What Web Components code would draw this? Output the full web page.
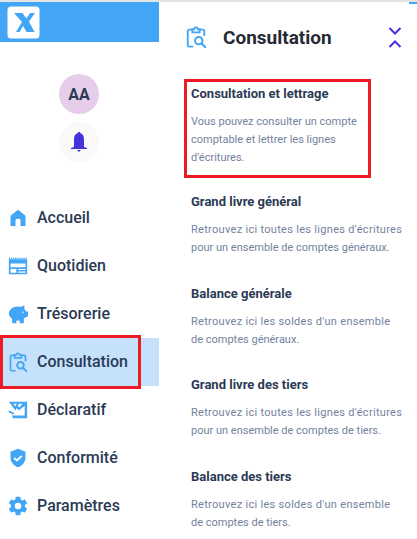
<!DOCTYPE html>
<html lang="fr">
<head>
<meta charset="utf-8">
<title>Consultation</title>
<style>
    html, body { margin: 0; height: 100%; background: #fff; overflow: hidden; }
    body { font-family: Roboto, "Liberation Sans", sans-serif; }
</style>
</head>
<body>
<app-shell>
    <side-nav slot="nav">
        <nav-item label="Accueil" icon="home"></nav-item>
        <nav-item label="Quotidien" icon="daily"></nav-item>
        <nav-item label="Trésorerie" icon="piggy"></nav-item>
        <nav-item label="Consultation" icon="consult" active marked></nav-item>
        <nav-item label="Déclaratif" icon="declare"></nav-item>
        <nav-item label="Conformité" icon="shield"></nav-item>
        <nav-item label="Paramètres" icon="gear"></nav-item>
    </side-nav>
    <content-panel slot="content" heading="Consultation">
        <info-item heading="Consultation et lettrage" marked>Vous pouvez consulter un compte<br>comptable et lettrer les lignes<br>d'écritures.</info-item>
        <info-item heading="Grand livre général"><span class="wide">Retrouvez ici toutes les lignes d'écritures</span><br>pour un ensemble de comptes généraux.</info-item>
        <info-item heading="Balance générale"><span class="wide">Retrouvez ici les soldes d'un ensemble</span><br>de comptes généraux.</info-item>
        <info-item heading="Grand livre des tiers"><span class="wide">Retrouvez ici toutes les lignes d'écritures</span><br>pour un ensemble de comptes de tiers.</info-item>
        <info-item heading="Balance des tiers"><span class="wide">Retrouvez ici les soldes d'un ensemble</span><br>de comptes de tiers.</info-item>
    </content-panel>
</app-shell>

<script>
(function () {
    const consultIcon = `<path fill="none" stroke="currentColor" stroke-width="2" stroke-linejoin="round" d="M8 4H4.500A1.500 1.500 0 0 0 3 5.500V21a1.500 1.500 0 0 0 1.500 1.500H9M16 4h3.500A1.500 1.500 0 0 1 21 5.500V11"/><path fill="none" stroke="currentColor" stroke-width="2" d="M8 3.500h2a2 2 0 0 1 4 0h2V7H8z"/><circle cx="15" cy="16" r="4" fill="none" stroke="currentColor" stroke-width="2.200"/><path stroke="currentColor" stroke-width="2.400" stroke-linecap="round" d="M18 19l4 4"/>`;

    const icons = {
        home: `<path fill="currentColor" d="M12 2 L4 8.500 Q3 9.300 3 10.500V21.500h6v-7q0-1.500 3-1.500t3 1.500v7h6V10.500Q21 9.300 20 8.500z"/>`,
        daily: `<path fill="currentColor" fill-rule="evenodd" d="M1 4h22v18H1zM3 9v4.500h18V9zM3 15.500V20h7v-4.500zM12 15.500v1.200h9v-1.200zM12 18.500V20h9v-1.500z"/><path stroke="currentColor" stroke-width="2" stroke-dasharray="1.500 1" d="M1 3h22"/>`,
        piggy: `<ellipse cx="11.500" cy="11.500" rx="10.500" ry="8.500" fill="currentColor"/><path fill="currentColor" d="M14 5c1-1.800 3-3 5-3 .8 0 1 .6.9 1.400l-.5 3.100 1.500 2.500H24v6l-3 1-4 3-3-1-8 0-2-3z"/><path fill="currentColor" d="M5 17h5v6H5zM14 17h5v6h-5z"/><circle cx="18" cy="10" r=".9" fill="#fff"/>`,
        consult: consultIcon,
        declare: `<path fill="currentColor" fill-rule="evenodd" d="M1 2h22v20H6l-1.500-3.500H20V7l-7 5.500-2.500-3L9 12.500zM6 4.500l3 3 1.500-3zM13 4.500l-1 3 1.500 1.500 4-4.500z"/><path fill="currentColor" d="M1 12.500l6.500 3-1 2L1 15z"/>`,
        shield: `<path fill="currentColor" d="M12 1 3 4.500V11c0 5.700 3.800 10.500 9 12 5.200-1.500 9-6.300 9-12V4.500z"/><path fill="none" stroke="#fff" stroke-width="2.200" d="M7.500 12l3.200 3 5.800-5.500"/>`,
        gear: `<path fill="currentColor" transform="translate(12 12) scale(1.120) translate(-12 -12)" d="M19.430 12.980c.04-.32.070-.64.070-.98s-.03-.66-.07-.98l2.110-1.650a.5.5 0 0 0 .12-.64l-2-3.460a.5.5 0 0 0-.61-.22l-2.490 1c-.52-.4-1.080-.73-1.690-.98l-.38-2.650A.49.49 0 0 0 14 2h-4a.49.49 0 0 0-.49.42l-.38 2.650c-.61.25-1.170.59-1.690.98l-2.490-1a.49.49 0 0 0-.61.22l-2 3.460a.49.49 0 0 0 .12.64l2.110 1.650c-.04.32-.07.65-.07.98s.03.66.07.98l-2.110 1.650a.5.5 0 0 0-.12.64l2 3.460c.12.22.39.3.61.22l2.490-1c.52.4 1.080.73 1.690.98l.38 2.650c.03.24.24.42.49.42h4c.25 0 .46-.18.49-.42l.38-2.650c.61-.25 1.170-.59 1.690-.98l2.490 1c.23.09.49 0 .61-.22l2-3.460a.5.5 0 0 0-.12-.64zM12 15.500a3.500 3.500 0 1 1 0-7 3.500 3.500 0 0 1 0 7z"/>`
    };

    class AppShell extends HTMLElement {
        constructor() {
            super();
            this.attachShadow({ mode: 'open' });
            this.shadowRoot.innerHTML = `
                <style>
                    :host { display: block; height: 539px; position: relative; color: #2b3a55; }
                    .layout { display: grid; grid-template-columns: 159px 1fr; height: 100%; padding-top: 2px; box-sizing: border-box; }
                    .rule { position: absolute; top: 0; left: 0; right: 0; height: 2px; background: #e4e4e4; }
                    .corner { position: absolute; top: 2px; right: 0; width: 8px; height: 2px; background: #42a5f5; }
                </style>
                <div class="rule"></div>
                <div class="corner"></div>
                <div class="layout">
                    <slot name="nav"></slot>
                    <slot name="content"></slot>
                </div>
            `;
        }
    }

    class SideNav extends HTMLElement {
        constructor() {
            super();
            this.attachShadow({ mode: 'open' });
            this.shadowRoot.innerHTML = `
                <style>
                    :host { display: flex; flex-direction: column; }
                    .brand { height: 40px; background: #42a5f5; display: flex; align-items: center; padding-left: 7px; flex: none; }
                    .logo { width: 33px; height: 33px; display: block; }
                    .profile { display: flex; flex-direction: column; align-items: center; gap: 8px; padding: 32px 1px 0 0; }
                    .avatar, .bell { width: 40px; height: 40px; border-radius: 50%; display: flex; align-items: center; justify-content: center; }
                    .avatar { background: #e6cdea; font-size: 16px; font-weight: 700; color: #2b3a55; }
                    .bell { background: #f9f9f9; color: #4632dc; }
                    .links { display: flex; flex-direction: column; margin-top: 32px; }
                </style>
                <div class="brand">
                    <svg class="logo" viewBox="0 0 33 33">
                        <rect x="0.500" y="0.500" width="32" height="32" rx="3.500" fill="#fff"/>
                        <path fill="#42a5f5" d="M7 7h8.500l4 5.500L23 7h5l-6 8.500 5.500 10.500h-8l-3.500-6-3.500 6H9l6-10z"/>
                    </svg>
                </div>
                <div class="profile">
                    <div class="avatar">AA</div>
                    <div class="bell">
                        <svg width="16" height="20" viewBox="0 0 16 20"><path fill="currentColor" d="M8 0c.8 0 1.300.5 1.400 1.200C12 2 13 4.300 13 7.500V15l3 1v1H0v-1l3-1V7.500C3 4.300 4 2 6.600 1.200 6.700.5 7.200 0 8 0zM6 18h4l-2 2z"/></svg>
                    </div>
                </div>
                <div class="links"><slot></slot></div>
            `;
        }
    }

    class NavItem extends HTMLElement {
        constructor() {
            super();
            this.attachShadow({ mode: 'open' });
        }

        connectedCallback() {
            const active = this.hasAttribute('active');
            const marked = this.hasAttribute('marked');
            this.shadowRoot.innerHTML = `
                <style>
                    :host { display: block; position: relative; }
                    .item { height: 48px; display: flex; align-items: center; gap: 9px; padding-left: 8px; box-sizing: border-box; color: #2b3a55; font-size: 16px; font-weight: 500; }
                    .item.is-active { background: #c5e1fb; }
                    svg { width: 20px; height: 20px; color: #42a5f5; flex: none; }
                    span { position: relative; top: -1px; }
                    .mark { position: absolute; left: 0; top: -3px; width: 141px; height: 54px; border: 3px solid #ed1c24; box-sizing: border-box; }
                </style>
                <div class="item ${active ? 'is-active' : ''}">
                    <svg viewBox="0 0 24 24">${icons[this.getAttribute('icon')] || ''}</svg>
                    <span>${this.getAttribute('label') || ''}</span>
                </div>
                ${marked ? '<div class="mark"></div>' : ''}
            `;
        }
    }

    class ContentPanel extends HTMLElement {
        constructor() {
            super();
            this.attachShadow({ mode: 'open' });
        }

        connectedCallback() {
            this.shadowRoot.innerHTML = `
                <style>
                    :host { display: block; padding-left: 26px; padding-right: 24px; }
                    header { display: flex; align-items: center; height: 70px; }
                    header .glyph { width: 22px; height: 22px; color: #42a5f5; flex: none; }
                    h1 { margin: 0 0 0 16px; flex: 1; font-size: 19px; font-weight: 700; color: #252a34; }
                    .toggle { width: 14px; height: 22px; color: #4632dc; flex: none; }
                    .list { display: flex; flex-direction: column; gap: 27.500px; padding-left: 6px; margin-top: 13px; }
                </style>
                <header>
                    <svg class="glyph" viewBox="0 0 24 24">${icons.consult}</svg>
                    <h1>${this.getAttribute('heading') || ''}</h1>
                    <svg class="toggle" viewBox="0 0 14 22" fill="none" stroke="currentColor" stroke-width="2"><path d="M1.500 2l5.500 5.500L12.500 2M1.500 21l5.500-5.500 5.500 5.500"/></svg>
                </header>
                <div class="list"><slot></slot></div>
            `;
        }
    }

    class InfoItem extends HTMLElement {
        constructor() {
            super();
            this.attachShadow({ mode: 'open' });
        }

        connectedCallback() {
            this.shadowRoot.innerHTML = `
                <style>
                    :host { display: block; position: relative; }
                    :host([marked]) { margin-bottom: -1.500px; }
                    h2 { margin: 0 0 10px; font-size: 13px; line-height: 18px; font-weight: 700; color: #2b3a55; }
                    p { margin: 0; font-size: 11px; line-height: 18px; color: #74829e; white-space: nowrap; }
                    ::slotted(.wide) { letter-spacing: .3px; }
                    .mark { position: absolute; left: -7px; top: -6px; width: 187px; height: 99px; border: 3px solid #ed1c24; box-sizing: border-box; }
                </style>
                <h2>${this.getAttribute('heading') || ''}</h2>
                <p><slot></slot></p>
                ${this.hasAttribute('marked') ? '<div class="mark"></div>' : ''}
            `;
        }
    }

    customElements.define('app-shell', AppShell);
    customElements.define('side-nav', SideNav);
    customElements.define('nav-item', NavItem);
    customElements.define('content-panel', ContentPanel);
    customElements.define('info-item', InfoItem);
}());
</script>
</body>
</html>
